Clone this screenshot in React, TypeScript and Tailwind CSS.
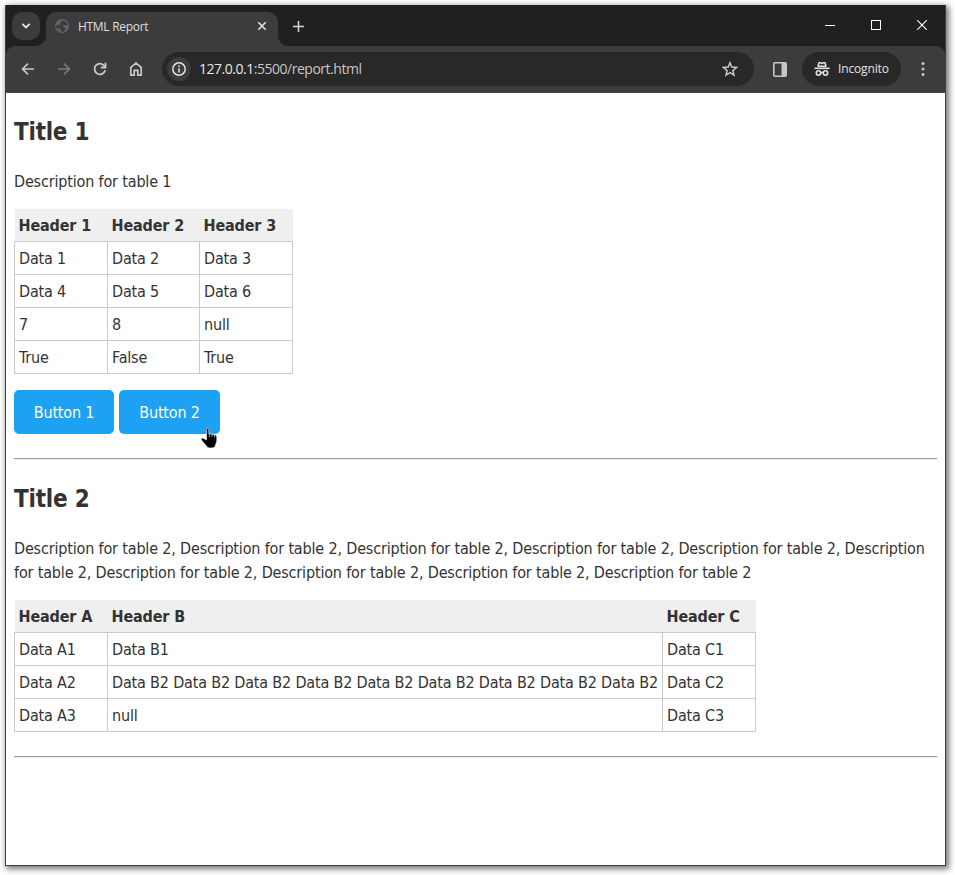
import React from "react";

const PAGE_FONT = "font-['DejaVu_Sans_Condensed','DejaVu_Sans',sans-serif] [font-stretch:condensed]";

function TabStrip() {
  return (
    <div className="flex h-[41px] bg-[#1f2120] pl-[6px]">
      <div className="mt-[7px] flex h-7 w-7 items-center justify-center rounded-[10px] bg-[#3c3c3c]">
        <svg width="10" height="8" viewBox="0 0 10 8" fill="none" stroke="#e3e3e3" strokeWidth="1.8">
          <path d="M1.3 1.8 5 5.5 8.7 1.8" />
        </svg>
      </div>
      <Flare side="left" />
      <div className="mt-[7px] flex h-[34px] w-[232px] items-start rounded-t-[10px] bg-[#3c3c3c] pl-[9px]">
        <svg className="mt-[7px]" width="14" height="14" viewBox="0 0 14 14">
          <circle cx="7" cy="7" r="7" fill="#5f6368" />
          <path d="M7.500 1.500C6.800 2.600 5.800 2.600 5.400 3.500 5 4.500 6 4.700 5.600 5.600 5.200 6.400 3.500 6 1.300 6.200 1.100 7.500 1.400 8.700 2 9.700L5 9.500C6.200 9.800 5.700 11 6.200 12.700 7.400 12.900 8.400 12.700 9.400 12.200 9.600 10.800 10.600 10.500 10.800 9.500 10.900 8.500 9.300 8.800 8.300 8.200 7.400 7.600 7.800 6.400 8.800 6.100 10.200 5.800 11 6.700 12.700 6.300 12.300 3.900 10.200 1.800 7.500 1.500Z" fill="#3c3c3c" />
        </svg>
        <span className="ml-[9px] mt-[6px] w-[100px] whitespace-nowrap font-['Open_Sans',sans-serif] text-[12px] leading-[18px] tracking-[-0.300px] text-[#dfdfdf]">
          HTML Report
        </span>
        <svg className="ml-[79px] mt-[9px]" width="10" height="10" viewBox="0 0 10 10" stroke="#e3e3e3" strokeWidth="1.6">
          <path d="M1.300 1.300 8.700 8.700M8.700 1.300 1.300 8.700" />
        </svg>
      </div>
      <Flare side="right" />
      <svg className="ml-[4.500px] mt-[15.500px]" width="11" height="11" viewBox="0 0 11 11" stroke="#d5d5d5" strokeWidth="1.500">
        <path d="M5.500 0v11M0 5.500h11" />
      </svg>
      <div className="ml-auto mr-[18px] mt-[15px] flex gap-[36px]">
        <svg width="10" height="11" viewBox="0 0 10 11" stroke="#fff">
          <path d="M0 5.500h10" />
        </svg>
        <svg width="10" height="10" viewBox="0 0 10 10" fill="none" stroke="#fff">
          <rect x=".5" y=".5" width="9" height="9" />
        </svg>
        <svg width="10" height="10" viewBox="0 0 10 10" stroke="#fff" strokeWidth="1.100">
          <path d="M.2.2 9.800 9.800M9.800.2.2 9.800" />
        </svg>
      </div>
    </div>
  );
}

function Flare({ side }: { side: "left" | "right" }) {
  return (
    <svg
      className={side === "left" ? "-ml-[4px] self-end" : "self-end"}
      width="10"
      height="10"
      viewBox="0 0 10 10"
      fill="#3c3c3c"
    >
      <path d={side === "left" ? "M10 0A10 10 0 0 1 0 10H10Z" : "M0 0A10 10 0 0 0 10 10H0Z"} />
    </svg>
  );
}

function Toolbar() {
  return (
    <div className="bg-[#1f2120]">
      <div className="flex h-[47px] items-center rounded-t-[9px] border-b border-[#4a4a4a] bg-[#3c3c3c] pl-[14px]">
        <svg width="16" height="16" viewBox="0 0 16 16" fill="none" stroke="#c7c7c7" strokeWidth="1.700">
          <path d="M14 8H3M8 2.600 2.600 8 8 13.400" />
        </svg>
        <svg className="ml-[20px]" width="16" height="16" viewBox="0 0 16 16" fill="none" stroke="#7b7b7b" strokeWidth="1.700">
          <path d="M2 8h11M8 2.600 13.400 8 8 13.400" />
        </svg>
        <svg className="ml-[20px]" width="16" height="16" viewBox="0 0 16 16" fill="none" stroke="#c7c7c7" strokeWidth="1.800">
          <path d="M13.200 9.300A5.400 5.400 0 1 1 12.300 4.700L13.600 6" />
          <path d="M13.500 1.800v4.700H8.800" />
        </svg>
        <svg className="ml-[20px]" width="16" height="16" viewBox="0 0 16 16" fill="none" stroke="#c7c7c7" strokeWidth="1.700">
          <path d="M2.800 6.300 8 2.200l5.200 4.100v7.900H9.800V9.300H6.200v4.900H2.800Z" />
        </svg>
        <div className="ml-[18px] flex h-[34px] w-[592px] items-center rounded-full bg-[#282828] pl-[5px]">
          <div className="flex h-6 w-6 items-center justify-center rounded-full bg-[#3c3c3c]">
            <svg width="14" height="14" viewBox="0 0 14 14" fill="none" stroke="#e3e3e3" strokeWidth="1.500">
              <circle cx="7" cy="7" r="6.200" />
              <path d="M7 6.200V10.500M7 3.500V5" />
            </svg>
          </div>
          <span className="ml-[8px] whitespace-nowrap font-['Open_Sans',sans-serif] text-[14px] leading-5 tracking-[-0.480px] text-[#c7c7c7]">
            <span className="text-[#e8e8e8]">127.0.0.1</span>:5500/report.html
          </span>
          <svg className="ml-auto mr-[16px]" width="16" height="16" viewBox="0 0 16 16" fill="none" stroke="#c7c7c7" strokeWidth="1.500">
            <path d="m8 1.800 1.800 4.300 4.700.4-3.600 3.100 1.100 4.600L8 11.700l-4 2.500 1.100-4.600-3.600-3.100 4.700-.4Z" />
          </svg>
        </div>
        <svg className="ml-[19px]" width="14" height="15" viewBox="0 0 14 15">
          <rect x=".8" y=".8" width="12.400" height="13.400" rx="1" fill="none" stroke="#c7c7c7" strokeWidth="1.600" />
          <path d="M8.500 1H13v13H8.500Z" fill="#c7c7c7" />
        </svg>
        <div className="ml-[15px] flex h-[34px] w-[99px] items-center rounded-full bg-[#282828] pl-[12px]">
          <svg width="16" height="16" viewBox="0 0 16 16" fill="none" stroke="#e3e3e3" strokeWidth="1.600">
            <path d="M.5 7.300h15" />
            <path d="M3.600 5.200h8.800M4 5 5 1.800h1.500L8 2.400 9.500 1.800H11L12 5" />
            <circle cx="4.500" cy="12" r="2.200" />
            <circle cx="11.500" cy="12" r="2.200" />
            <path d="M6.500 11.500h3" />
          </svg>
          <span className="ml-[8px] whitespace-nowrap font-['Open_Sans',sans-serif] text-[12px] leading-[18px] tracking-[-0.150px] text-[#e3e3e3]">
            Incognito
          </span>
        </div>
        <svg className="ml-[20px]" width="4" height="14" viewBox="0 0 4 14" fill="#c7c7c7">
          <circle cx="2" cy="1.600" r="1.500" />
          <circle cx="2" cy="7" r="1.500" />
          <circle cx="2" cy="12.400" r="1.500" />
        </svg>
      </div>
    </div>
  );
}

function DataTable({ headers, rows, middle }: { headers: string[]; rows: string[][]; middle: string }) {
  const widths = ["w-[93px]", middle, "w-[94px]"];
  return (
    <div className="text-[16px]">
      <div className="ml-px flex h-8 w-max bg-[#efefef] font-bold">
        {headers.map((h, i) => (
          <div key={h} className={`${widths[i]} whitespace-nowrap pl-[3.500px] pt-px leading-8 tracking-[-0.150px] ${i === 2 ? "-mr-px" : ""}`}>
            {h}
          </div>
        ))}
      </div>
      <div className="w-max border-b border-[#cacaca]">
        {rows.map((r, i) => (
          <div key={i} className="flex h-[33px] border-t border-[#cacaca]">
            {r.map((c, j) => (
              <div
                key={j}
                className={`${widths[j]} whitespace-nowrap border-l border-[#cacaca] pl-[4px] leading-[33px] tracking-[-0.175px] ${j === 2 ? "border-r" : ""}`}
              >
                {c}
              </div>
            ))}
          </div>
        ))}
      </div>
    </div>
  );
}

function Rule() {
  return <div className="mt-6 h-[2px] border-t border-[#9a9a9a] bg-[#ededed]" />;
}

function HandCursor() {
  return (
    <svg className="absolute left-[200px] top-[427px]" width="18" height="22" viewBox="0 0 18 22">
      <path
        d="M6.500 2.500C6.500.7 8.800.7 8.800 2.500V6.500L15.500 8Q17 8.500 16.800 10.500V14L15 19.500Q14 21 11 21H9Q7 20.500 6 18.500L1.300 13Q.5 11 3 11L6.500 13Z"
        fill="#000"
        stroke="#fff"
        strokeWidth=".6"
      />
      <path d="M9.300 6v4M12 6.800V10M14.500 7.500v3" stroke="#fff" strokeWidth=".6" />
    </svg>
  );
}

export default function App() {
  return (
    <div className="relative h-[875px] w-[955px] overflow-hidden bg-white p-[5px]">
      <div className="flex h-[861px] w-[941px] flex-col border-x border-b border-[#3f3f3f] bg-white shadow-[2px_2px_6px_1px_rgba(0,0,0,0.55)]">
        <TabStrip />
        <Toolbar />
        <main className={`px-2 text-[#333] ${PAGE_FONT}`}>
          <h2 className="mt-[21px] text-[24px] font-bold leading-9 tracking-[-0.250px]">Title 1</h2>
          <p className="mt-[20px] text-[16px] leading-6 tracking-[-0.165px]">Description for table 1</p>
          <div className="mt-[15px]">
            <DataTable
              headers={["Header 1", "Header 2", "Header 3"]}
              middle="w-[92px]"
              rows={[
                ["Data 1", "Data 2", "Data 3"],
                ["Data 4", "Data 5", "Data 6"],
                ["7", "8", "null"],
                ["True", "False", "True"],
              ]}
            />
          </div>
          <div className="mt-4 flex gap-[5px] text-[16px] tracking-[-0.200px] text-white">
            <button className="h-11 w-[100px] rounded-[5px] bg-[#1da1f2] pt-[2px]">Button 1</button>
            <button className="h-11 w-[101px] rounded-[5px] bg-[#1da1f2] pt-[2px]">Button 2</button>
          </div>
          <Rule />
          <h2 className="mt-[21px] text-[24px] font-bold leading-9 tracking-[-0.200px]">Title 2</h2>
          <p className="mt-[20px] whitespace-nowrap text-[16px] leading-6 tracking-[-0.165px]">
            Description for table 2, Description for table 2, Description for table 2, Description for table 2, Description for table 2, Description
            <br />
            for table 2, Description for table 2, Description for table 2, Description for table 2, Description for table 2
          </p>
          <div className="mt-[15px]">
            <DataTable
              headers={["Header A", "Header B", "Header C"]}
              middle="w-[555px]"
              rows={[
                ["Data A1", "Data B1", "Data C1"],
                ["Data A2", "Data B2 Data B2 Data B2 Data B2 Data B2 Data B2 Data B2 Data B2 Data B2", "Data C2"],
                ["Data A3", "null", "Data C3"],
              ]}
            />
          </div>
          <Rule />
        </main>
      </div>
      <HandCursor />
    </div>
  );
}
